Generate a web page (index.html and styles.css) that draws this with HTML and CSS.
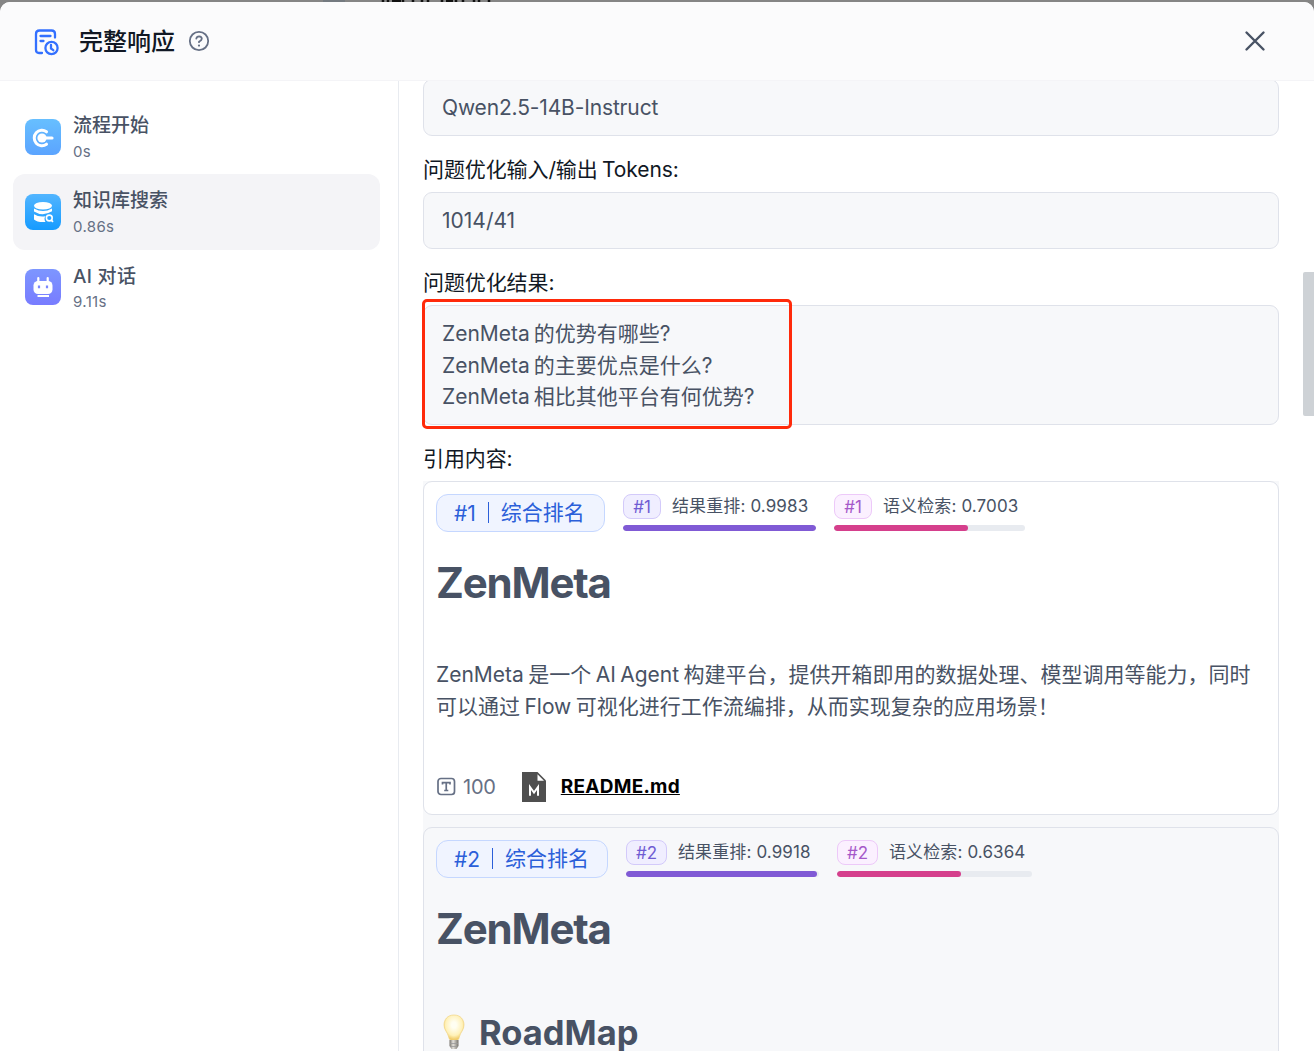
FILE: index.html
```html
<!DOCTYPE html>
<html lang="zh-CN">
<head>
<meta charset="utf-8">
<title>完整响应</title>
<link rel="stylesheet" href="styles.css">
</head>
<body>
<div class="backdrop"><span class="backdrop-tile"></span><svg class="backdrop-marks" width="112" height="2" viewBox="0 0 112 2"><path d="M3 0v2M8 0v2M12 1h9M23 0v2M33 0v2M42 0v2M48 0v2M62 0v2M66 1h7M76 0v2M83 0v2M94 0v2M99 0v2M109 0v2" stroke="#111" stroke-width="2.500" fill="none"/></svg></div>
<section class="modal">
  <header class="modal-header">
    <svg class="title-icon" width="26" height="28" viewBox="0 0 26 28" fill="none" stroke="#3370ff" stroke-width="2.3" stroke-linecap="round" stroke-linejoin="round">
      <path d="M8 25H5Q2 25 2 22V6Q2 2.500 5.500 2.500H17.500Q21 2.500 21 6V9.500M6.500 8H16.500M6.500 13H9.500"/>
      <circle cx="17.500" cy="20" r="6.100"/><path d="M17 17v3.500l2.300 1.700"/>
    </svg>
    <h1 class="modal-title">完整响应</h1>
    <svg class="help-icon" width="22" height="22" viewBox="0 0 22 22" fill="none" stroke="#667085" stroke-width="1.800" stroke-linecap="round" stroke-linejoin="round">
      <circle cx="11" cy="11" r="9.200"/><path d="M8.300 8.600Q8.700 6.300 11.100 6.300Q13.800 6.400 13.800 8.800Q13.800 10.300 11 11.800V12.200"/><path d="M11 15.500v.1" stroke-width="2.200"/>
    </svg>
    <svg class="close-icon" width="22" height="22" viewBox="0 0 22 22" fill="none" stroke="#485264" stroke-width="2.400" stroke-linecap="round"><path d="M2.500 2.500l17 17M19.500 2.500l-17 17"/></svg>
  </header>
  <div class="modal-body">
    <nav class="steps">
      <div class="step">
        <svg class="step-icon" width="36" height="36" viewBox="0 0 36 36">
          <defs><linearGradient id="g1" x1="0" y1="0" x2="0" y2="1"><stop stop-color="#67bfff"/><stop offset="1" stop-color="#5ba4ff"/></linearGradient></defs>
          <rect width="36" height="36" rx="8" fill="url(#g1)"/>
          <path d="M21.500 12.800A7.700 7.700 0 1 0 21.500 25.200" fill="none" stroke="#fff" stroke-width="3" stroke-linecap="round"/>
          <circle cx="17" cy="19" r="4.600" fill="#fff"/><path d="M18 19h9" stroke="#fff" stroke-width="3.200" stroke-linecap="round"/>
        </svg>
        <div class="step-text"><div class="step-name">流程开始</div><div class="step-time">0s</div></div>
      </div>
      <div class="step step-active">
        <svg class="step-icon" width="36" height="36" viewBox="0 0 36 36">
          <defs><linearGradient id="g2" x1="0" y1="0" x2="0" y2="1"><stop stop-color="#52b5ff"/><stop offset="1" stop-color="#169bff"/></linearGradient></defs>
          <rect width="36" height="36" rx="8" fill="url(#g2)"/>
          <ellipse cx="18" cy="11.800" rx="9" ry="3.800" fill="#fff"/>
          <path d="M9 14.500Q18 19.500 27 14.500V17.300Q18 23 9 17.500ZM9 20.300Q14 23.300 20.500 22.200Q18.500 24.500 20.500 28Q12 28.500 9 25.500Z" fill="#fff"/>
          <circle cx="24.300" cy="24" r="2.900" fill="none" stroke="#fff" stroke-width="1.600"/><path d="M26.500 26.300l1.500 1.500" stroke="#fff" stroke-width="1.700"/>
        </svg>
        <div class="step-text"><div class="step-name">知识库搜索</div><div class="step-time">0.86s</div></div>
      </div>
      <div class="step step-last">
        <svg class="step-icon" width="36" height="36" viewBox="0 0 36 36">
          <defs><linearGradient id="g3" x1="0" y1="0" x2="0" y2="1"><stop stop-color="#7d96ff"/><stop offset="1" stop-color="#787cff"/></linearGradient></defs>
          <rect width="36" height="36" rx="8" fill="url(#g3)"/>
          <path d="M13.300 9v5M22.700 9v5" stroke="#fff" stroke-width="2.200" stroke-linecap="round"/>
          <rect x="8.500" y="12" width="19" height="13" rx="4.500" fill="#fff"/><path d="M12.500 27h11.500" stroke="#fff" stroke-width="2"/>
          <path d="M14 16.500v2.800M22 16.500v2.800" stroke="#7b87ff" stroke-width="2.200"/>
        </svg>
        <div class="step-text"><div class="step-name">AI 对话</div><div class="step-time">9.11s</div></div>
      </div>
    </nav>
    <main class="detail">
      <div class="value value-first">Qwen2.5-14B-Instruct</div>
      <div class="label">问题优化输入/输出 Tokens:</div>
      <div class="value">1014/41</div>
      <div class="label">问题优化结果:</div>
      <div class="value value-lines">ZenMeta 的优势有哪些?<br>ZenMeta 的主要优点是什么?<br>ZenMeta 相比其他平台有何优势?<span class="highlight"></span></div>
      <div class="label">引用内容:</div>
      <div class="quotes">
        <article class="quote quote-white">
          <div class="scores">
            <div class="rank"><span>#1</span><i class="rank-line"></i><span class="rank-name">综合排名</span></div>
            <div class="score score-a">
              <div class="score-head"><span class="tag tag-violet">#1</span><span class="score-text">结果重排: 0.9983</span></div>
              <div class="bar"><div class="fill fill-violet" style="width:99.83%"></div></div>
            </div>
            <div class="score score-b">
              <div class="score-head"><span class="tag tag-pink">#1</span><span class="score-text">语义检索: 0.7003</span></div>
              <div class="bar"><div class="fill fill-pink" style="width:70.03%"></div></div>
            </div>
          </div>
          <h2 class="quote-title">ZenMeta</h2>
          <p class="quote-text">ZenMeta 是一个 AI Agent 构建平台，提供开箱即用的数据处理、模型调用等能力，同时<br>可以通过 Flow 可视化进行工作流编排，从而实现复杂的应用场景！</p>
          <footer class="quote-foot">
            <svg width="20" height="20" viewBox="0 0 20 20" fill="none" stroke="#667085" stroke-width="1.700"><rect x="2" y="1.500" width="16.500" height="16" rx="3"/><path d="M6.500 7.500V5.700H14V7.500M10.250 5.700V13.500M8.200 13.500H12.300"/></svg>
            <span class="count">100</span>
            <svg class="file-icon" width="24" height="30" viewBox="0 0 24 30"><path d="M0 0H15.500L24 8.500V30H0Z" fill="#4f4f4f"/><path d="M15.500 2.200V8.700H22Z" fill="#fff"/><path d="M8 23.800V15L12 20.500L16 15V23.800" fill="none" stroke="#fff" stroke-width="2"/></svg>
            <a class="file-name">README.md</a>
          </footer>
        </article>
        <article class="quote">
          <div class="scores">
            <div class="rank rank-2"><span>#2</span><i class="rank-line"></i><span class="rank-name">综合排名</span></div>
            <div class="score score-c">
              <div class="score-head"><span class="tag tag-violet tag-2">#2</span><span class="score-text">结果重排: 0.9918</span></div>
              <div class="bar"><div class="fill fill-violet" style="width:99.18%"></div></div>
            </div>
            <div class="score score-d">
              <div class="score-head"><span class="tag tag-pink tag-2">#2</span><span class="score-text">语义检索: 0.6364</span></div>
              <div class="bar"><div class="fill fill-pink" style="width:63.64%"></div></div>
            </div>
          </div>
          <h2 class="quote-title">ZenMeta</h2>
          <h3 class="quote-subtitle">
            <svg width="22" height="38" viewBox="0 0 22 38"><defs><radialGradient id="bulb" cx=".5" cy=".4" r=".6"><stop offset=".2" stop-color="#fffef2"/><stop offset=".7" stop-color="#fff1b8"/><stop offset="1" stop-color="#efc65c"/></radialGradient><linearGradient id="cap"><stop stop-color="#77736b"/><stop offset=".4" stop-color="#e3e0da"/><stop offset="1" stop-color="#77736b"/></linearGradient></defs><path d="M11 1C4.500 1 1 5.500 1 11C1 16 4.500 18 5.700 23Q6 26 8 26H14Q16 26 16.300 23C17.500 18 21 16 21 11C21 5.500 17.500 1 11 1Z" fill="url(#bulb)" stroke="#f0d483" stroke-width=".7"/><path d="M6.500 26H15.500V32L13.500 35H8.500L6.500 32Z" fill="url(#cap)"/><path d="M7 29.500H15M7.500 32.500H14.500" stroke="#999" stroke-width=".8"/></svg>
            <span>RoadMap</span>
          </h3>
        </article>
      </div>
      <div class="scroll-thumb"></div>
    </main>
  </div>
</section>
</body>
</html>
```
FILE: styles.css
```css
* { box-sizing: border-box; }
body {
  margin: 0;
  height: 1051px;
  overflow: hidden;
  background: #858585;
  font-family: Inter, "Noto Sans CJK SC", sans-serif;
  font-size: 21px;
  font-weight: 390;
  color: #485264;
}
h1, h2, h3, p { margin: 0; }
svg { display: block; flex: none; }
.backdrop { display: flex; height: 2px; padding-left: 323px; overflow: hidden; }
.backdrop-tile { width: 22px; margin-right: 35px; background: #747a80; }
.modal { height: 1049px; background: #fff; border-radius: 10px 10px 0 0; overflow: hidden; display: flex; flex-direction: column; }
.modal-header { height: 79px; flex: none; display: flex; align-items: center; padding: 0 48px 0 34px; background: #fbfbfc; border-bottom: 1px solid #f4f4f7; }
.title-icon { margin-top: 1px; }
.modal-title { margin-left: 19px; padding-top: 2px; font-size: 24px; line-height: 36px; font-weight: 500; color: #111824; }
.help-icon { margin-left: 13px; }
.close-icon { margin-left: auto; }
.modal-body { flex: 1; min-height: 0; display: flex; }
.steps { width: 399px; flex: none; padding: 18px 18px 0 13px; border-right: 1px solid #e8ebf0; }
.step { height: 75px; display: flex; align-items: center; padding-left: 12px; border-radius: 12px; }
.step-active { height: 76px; background: #f4f4f7; }
.step-last { height: 74px; }
.step-text { margin-left: 12px; padding-top: 3px; }
.step-name { font-size: 19px; line-height: 26px; font-weight: 500; }
.step-last .step-name { padding-top: 1px; line-height: 25px; letter-spacing: .3px; }
.step-time { font-size: 15px; line-height: 25px; letter-spacing: .35px; color: #667085; }
.detail { flex: 1; min-width: 0; padding: 0 35px 0 24px; position: relative; overflow: hidden; }
.value { height: 57px; padding: 12px 18px; line-height: 31.5px; background: #f7f8fa; border: 1px solid #dfe2ea; border-radius: 9px; }
.value-first { margin-top: -2px; letter-spacing: -.15px; }
.value-lines { position: relative; height: 120px; word-spacing: -2px; }
.highlight { position: absolute; left: -2px; top: -7px; width: 370px; height: 130px; border: 3px solid #ff2a0a; border-radius: 5px; }
.label { height: 56px; padding-top: 12px; line-height: 44px; letter-spacing: -.1px; word-spacing: -1.5px; color: #111824; }
.quotes { background: #f7f8fa; }
.quote { height: 334px; padding: 12px; border: 1px solid #dfe2ea; border-radius: 9px; margin-bottom: 12px; }
.quote-white { background: #fff; }
.scores { display: flex; gap: 18px; height: 38px; }
.rank { width: 169px; height: 38px; display: flex; align-items: center; padding-left: 17px; color: #2b5fd9; background: #f0f4ff; border: 1px solid #c5d7ff; border-radius: 12px; white-space: nowrap; }
.rank-2 { width: 172px; }
.rank-name { margin-top: -4px; }
.rank-line { width: 1px; height: 21px; margin: -1px 12px 0; background: #2b5fd9; }
.score-a { width: 193px; }
.score-b { width: 191px; }
.score-c { width: 193px; }
.score-d { width: 195px; }
.score-head { display: flex; height: 25px; white-space: nowrap; }
.tag { width: 38px; height: 25px; line-height: 24px; text-align: center; font-size: 17px; border: 1px solid; border-radius: 8px; }
.tag-2 { width: 41px; }
.tag-violet { color: #6f5bd3; background: #f0eeff; border-color: #d3cafa; }
.tag-pink { color: #a558c9; background: #fbf0ff; border-color: #edc9f9; }
.score-text { margin-left: 11px; font-size: 17px; line-height: 25px; letter-spacing: .12px; }
.bar { height: 6px; margin-top: 6px; border-radius: 3px; background: #e8ebf0; overflow: hidden; }
.fill { height: 6px; border-radius: 3px; }
.fill-violet { background: #805ad5; }
.fill-pink { background: #d53f8c; }
.quote-title { margin-top: 24px; font-size: 42px; line-height: 54px; font-weight: 700; letter-spacing: -1.2px; }
.quote-text { margin-top: 49px; line-height: 31.5px; word-spacing: -1.5px; white-space: nowrap; }
.quote-foot { display: flex; align-items: center; height: 32px; margin-top: 49px; }
.count { margin-left: 7px; font-size: 20px; letter-spacing: -.2px; color: #667085; }
.file-icon { margin-left: 26px; }
.file-name { margin-left: 15px; font-size: 19px; line-height: 30px; font-weight: 700; letter-spacing: .25px; color: #000; text-decoration: underline; }
.quote-subtitle { display: flex; align-items: center; margin-top: 52px; margin-left: 7px; font-size: 34.5px; line-height: 50px; font-weight: 700; letter-spacing: 0; }
.quote-subtitle span { margin-left: 14px; }
.scroll-thumb { position: absolute; right: 0; top: 191px; width: 11px; height: 144px; border-radius: 2px 0 0 2px; background: #ced2d6; }
```
